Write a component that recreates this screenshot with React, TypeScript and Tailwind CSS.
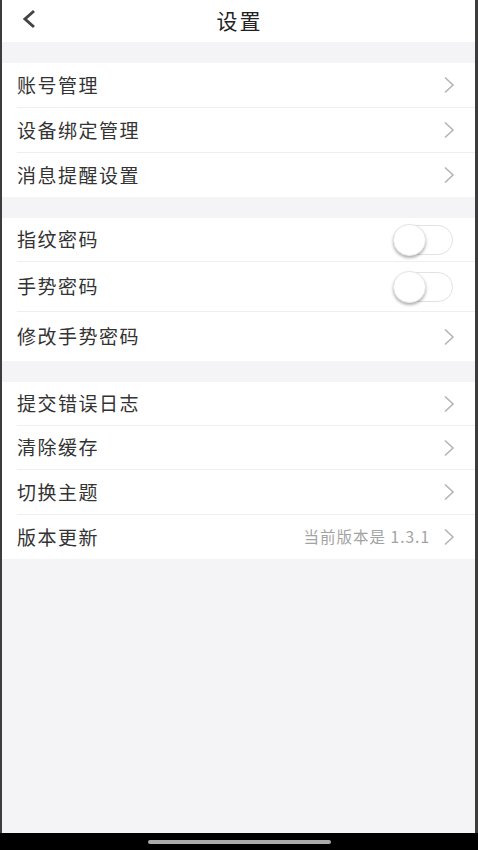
import React from 'react'

const font = { fontFamily: '"Noto Sans CJK SC", "Noto Sans", sans-serif' }

function Chevron() {
  return (
    <svg width="12" height="18" viewBox="0 0 12 18" className="shrink-0">
      <path d="M2 1.5 L10 9 L2 16.5" fill="none" stroke="#b5b5b5" strokeWidth="1.6" />
    </svg>
  )
}

function Toggle() {
  return (
    <div className="relative w-[60px] h-[30px] rounded-full border border-[#e2e2e2] bg-white">
      <div className="absolute left-[-1px] top-[-2px] w-[33px] h-[32px] rounded-full bg-white shadow-[0_2px_3px_rgba(0,0,0,0.3)] border border-[#e6e6e6]" />
    </div>
  )
}

interface Row {
  label: string
  h: string
  toggle?: boolean
  extra?: string
}

function Section({ rows }: { rows: Row[] }) {
  return (
    <div className="bg-white">
      {rows.map((r, i) => (
        <div key={r.label} className="pl-[15px]">
          <div
            className={`${r.h} flex items-center pr-5 ${i < rows.length - 1 ? 'border-b border-[#efefef]' : ''}`}
          >
            <span className="flex-1 text-[19px] tracking-[1.5px] text-[#333]">{r.label}</span>
            {r.extra && (
              <span className="text-[15.5px] tracking-[1px] text-[#a3a3a3] mr-[13px]">{r.extra}</span>
            )}
            {r.toggle ? <div className="mr-[2px]"><Toggle /></div> : <Chevron />}
          </div>
        </div>
      ))}
    </div>
  )
}

export default function App() {
  return (
    <div className="h-[850px] flex flex-col bg-black" style={font}>
      <div className="flex-1 flex flex-col border-l-2 border-r-[3px] border-[#3c3c3c] bg-[#f4f4f6]">
        <div className="h-[42px] bg-white flex items-center relative">
          <svg width="16" height="20" viewBox="0 0 16 20" className="absolute left-[19px] top-[9px]">
            <path d="M13 2 L4 10 L13 18" fill="none" stroke="#444" strokeWidth="3" />
          </svg>
          <div className="flex-1 text-center text-[21px] tracking-[2px] pl-[2px] text-[#222]">设置</div>
        </div>
        <div className="h-[21px]" />
        <Section
          rows={[
            { label: '账号管理', h: 'h-[45px]' },
            { label: '设备绑定管理', h: 'h-[45px]' },
            { label: '消息提醒设置', h: 'h-[44px]' },
          ]}
        />
        <div className="h-[21px]" />
        <Section
          rows={[
            { label: '指纹密码', h: 'h-[44px]', toggle: true },
            { label: '手势密码', h: 'h-[50px]', toggle: true },
            { label: '修改手势密码', h: 'h-[49px]' },
          ]}
        />
        <div className="h-[21px]" />
        <Section
          rows={[
            { label: '提交错误日志', h: 'h-[44px]' },
            { label: '清除缓存', h: 'h-[44px]' },
            { label: '切换主题', h: 'h-[45px]' },
            { label: '版本更新', h: 'h-[44px]', extra: '当前版本是 1.3.1' },
          ]}
        />
      </div>
      <div className="h-[17px] bg-black flex items-center justify-center">
        <div className="w-[183px] h-[4px] rounded-full bg-[#aaa]" />
      </div>
    </div>
  )
}
